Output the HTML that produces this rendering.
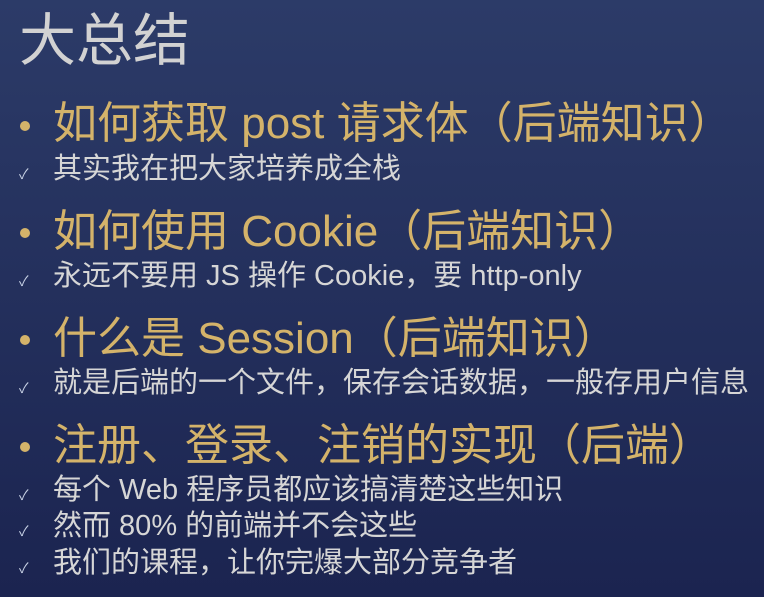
<!DOCTYPE html>
<html><head><meta charset="utf-8"><style>
html,body{margin:0;padding:0}
body{width:764px;height:597px;overflow:hidden;background:linear-gradient(#2c3b68,#1b2450);font-family:"Liberation Sans","Noto Sans CJK SC",sans-serif;position:relative}
.t{position:absolute;white-space:nowrap;line-height:1}
.title{left:19px;top:13px;font-size:57px;color:#d2d2d2}
.h{left:53px;font-size:44px;color:#d4b36a}
.dot{position:absolute;left:20px;width:10px;height:10px;border-radius:50%;background:#d4b36a}
.s{left:53px;font-size:29px;color:#d6d6d6}
.ck{position:absolute;left:19px;font-size:14px;color:#c9d3e6}
</style></head><body>
<div class="t title">大总结</div>

<div class="dot" style="top:121px"></div>
<div class="t h" style="top:102px">如何获取 post 请求体（后端知识）</div>
<div class="ck" style="top:164px">✓</div>
<div class="t s" style="top:155px">其实我在把大家培养成全栈</div>

<div class="dot" style="top:228px"></div>
<div class="t h" style="top:210px">如何使用 Cookie（后端知识）</div>
<div class="ck" style="top:271px">✓</div>
<div class="t s" style="top:262px">永远不要用 JS 操作 Cookie，要 http-only</div>

<div class="dot" style="top:335px"></div>
<div class="t h" style="top:317px">什么是 Session（后端知识）</div>
<div class="ck" style="top:378px">✓</div>
<div class="t s" style="top:369px">就是后端的一个文件，保存会话数据，一般存用户信息</div>

<div class="dot" style="top:442px"></div>
<div class="t h" style="top:424px">注册、登录、注销的实现（后端）</div>
<div class="ck" style="top:485px">✓</div>
<div class="t s" style="top:476px">每个 Web 程序员都应该搞清楚这些知识</div>
<div class="ck" style="top:521px">✓</div>
<div class="t s" style="top:512px">然而 80% 的前端并不会这些</div>
<div class="ck" style="top:558px">✓</div>
<div class="t s" style="top:549px">我们的课程，让你完爆大部分竞争者</div>
</body></html>
